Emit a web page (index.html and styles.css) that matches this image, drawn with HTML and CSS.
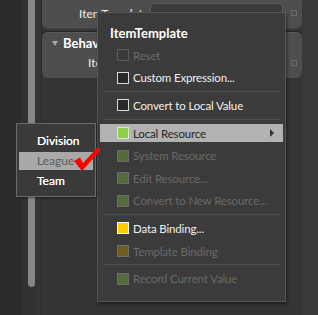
FILE: index.html
```html
<!DOCTYPE html>
<html>
<head>
<meta charset="utf-8">
<link rel="stylesheet" href="styles.css">
</head>
<body>
<div class="app">
  <div class="gutter"></div>
  <div class="track"></div>
  <div class="scroll"><div class="thumb"></div></div>
  <div class="pad"></div>
  <div class="main">
    <div class="section s1">
      <div class="prow r1">
        <span class="plabel l1">ItemTemplate</span>
        <span class="pinput"></span>
        <span class="pmark"></span>
      </div>
    </div>
    <div class="section s2">
      <div class="phead"><span class="tri"></span><span class="htext">Behavior</span></div>
      <div class="prow r2">
        <span class="plabel l2">ItemsSource</span>
        <span class="pinput hidden"></span>
        <span class="pmark"></span>
      </div>
    </div>
  </div>
  <div class="right"></div>
</div>

<div class="menu">
  <div class="mhead">ItemTemplate</div>
  <div class="mlist">
    <div class="mi dis"><span class="box"></span>Reset</div>
    <div class="mi"><span class="box"></span>Custom Expression...</div>
    <div class="sep"></div>
    <div class="mi"><span class="box"></span>Convert to Local Value</div>
    <div class="sep"></div>
    <div class="mi hl"><span class="box green"></span>Local Resource<span class="arrow"></span></div>
    <div class="mi dis"><span class="box dgreen"></span>System Resource</div>
    <div class="mi dis"><span class="box dgreen"></span>Edit Resource...</div>
    <div class="mi dis"><span class="box dgreen"></span>Convert to New Resource...</div>
    <div class="sep"></div>
    <div class="mi"><span class="box yellow"></span>Data Binding...</div>
    <div class="mi dis"><span class="box olive"></span>Template Binding</div>
    <div class="sep"></div>
    <div class="mi dis"><span class="box dgreen"></span>Record Current Value</div>
  </div>
</div>

<div class="popup">
  <div class="pi">Division</div>
  <div class="pi sel">League</div>
  <div class="pi">Team</div>
</div>

<svg class="check" width="30" height="28" viewBox="0 0 30 28">
  <polygon points="2,16 8,12.5 11,18 26,2 28.5,5.5 10,26" fill="#ff0000"/>
</svg>
</body>
</html>
```

FILE: styles.css
```css
html, body {
  margin: 0;
  padding: 0;
}
body {
  width: 318px;
  height: 315px;
  overflow: hidden;
  background: #2e2e2e;
  font-family: Lato, "Open Sans", sans-serif;
  position: relative;
}
.app {
  display: flex;
  height: 315px;
}
.gutter {
  width: 22px;
  background: #2c2c2c;
}
.track {
  width: 6px;
  background: #313131;
}
.scroll {
  width: 7px;
  background: #303030;
}
.thumb {
  height: 287px;
  background: #868686;
  border-radius: 0 0 4px 4px;
}
.pad {
  width: 6px;
  background: #343434;
  border-right: 1px solid #2a2a2a;
}
.main {
  width: 260px;
  background: #343434;
  display: flex;
  flex-direction: column;
}
.section {
  background: #4e4e4e;
  position: relative;
}
.s1 {
  height: 28px;
  border-radius: 0 0 6px 6px;
  border-bottom: 1px solid #454545;
}
.s2 {
  margin-top: 3px;
  height: 45px;
  border-radius: 6px;
  border-top: 1px solid #5a5a5a;
  box-shadow: 0 -1px 0 #262626;
}
.prow {
  display: flex;
  align-items: flex-start;
}
.r1 {
  padding-top: 3px;
}
.plabel {
  font-size: 12px;
  color: #ededed;
  line-height: 16px;
  margin-top: 3px;
  white-space: nowrap;
  flex: none;
}
.l1 {
  margin-left: 37px;
  width: 71px;
}
.l2 {
  margin-left: 46px;
  width: 62px;
}
.pinput {
  width: 133px;
  height: 24px;
  background: #3b3b3b;
  border: 1px solid #5c5c5c;
  border-radius: 5px;
  box-sizing: border-box;
  flex: none;
}
.hidden {
  visibility: hidden;
}
.pmark {
  width: 4px;
  height: 4px;
  border: 1px solid #6c6c6c;
  margin-left: 8px;
  margin-top: 7px;
  flex: none;
}
.r2 .pmark {
  margin-top: 8px;
}
.phead {
  display: flex;
  align-items: center;
  height: 18px;
  padding-top: 1px;
  padding-left: 10px;
}
.tri {
  width: 0;
  height: 0;
  border-left: 3px solid transparent;
  border-right: 3px solid transparent;
  border-top: 5px solid #a8a8a8;
  margin-right: 5px;
}
.htext {
  font-size: 13px;
  font-weight: bold;
  color: #ffffff;
  white-space: nowrap;
}
.right {
  width: 16px;
  background: #393939;
}

/* context menu */
.menu {
  position: absolute;
  left: 97px;
  top: 12px;
  width: 187px;
  height: 288px;
  background: #3b3b3b;
  border: 1px solid #575757;
  box-shadow: 1px 2px 3px rgba(0, 0, 0, 0.45);
}
.mhead {
  height: 31px;
  box-sizing: border-box;
  padding: 12px 0 0 12px;
  font-size: 13px;
  line-height: 16px;
  font-weight: bold;
  color: #ffffff;
}
.mlist {
  display: flex;
  flex-direction: column;
}
.mi {
  height: 18px;
  margin: 2.3px 2px;
  display: flex;
  align-items: center;
  font-size: 11.5px;
  letter-spacing: -0.15px;
  color: #f0f0f0;
  position: relative;
  white-space: nowrap;
}
.mi.dis {
  color: #6a6a6a;
}
.mi.hl {
  background: #b2b2b2;
  color: #262626;
}
.box {
  width: 12px;
  height: 12px;
  box-sizing: border-box;
  border: 1px solid #d8d8d8;
  background: #2a2a2a;
  margin-left: 17px;
  margin-right: 4px;
  flex: none;
}
.dis .box {
  border-color: #595959;
  background: #3b3b3b;
}
.box.green {
  background: #8ed04c;
  border-color: #d8ecc4;
}
.dis .box.dgreen {
  background: #566b3c;
  border-color: #6b6b6b;
}
.box.yellow {
  background: #ffcc00;
  border-color: #ffffff;
}
.dis .box.olive {
  background: #6f5e22;
  border-color: #6e6e6e;
}
.arrow {
  position: absolute;
  right: 9px;
  top: 5px;
  width: 0;
  height: 0;
  border-top: 4px solid transparent;
  border-bottom: 4px solid transparent;
  border-left: 4px solid #303030;
}
.sep {
  height: 1px;
  margin: 2px 5px;
  background: #4e4e4e;
}

/* dropdown popup */
.popup {
  position: absolute;
  left: 16px;
  top: 123px;
  width: 78px;
  height: 67px;
  padding-top: 5px;
  background: #3a3a3a;
  border: 1px solid #6a6a6a;
  box-shadow: 1px 1px 2px rgba(0, 0, 0, 0.4);
}
.pi {
  height: 18px;
  margin: 2.25px 2px;
  padding-left: 18px;
  display: flex;
  align-items: center;
  font-size: 12px;
  color: #ffffff;
  text-shadow: 0 0 0.4px #ffffff;
}
.pi.sel {
  background: #a9a9a9;
  color: #5c5c5c;
  text-shadow: none;
}
.check {
  position: absolute;
  left: 72px;
  top: 145px;
}
```
